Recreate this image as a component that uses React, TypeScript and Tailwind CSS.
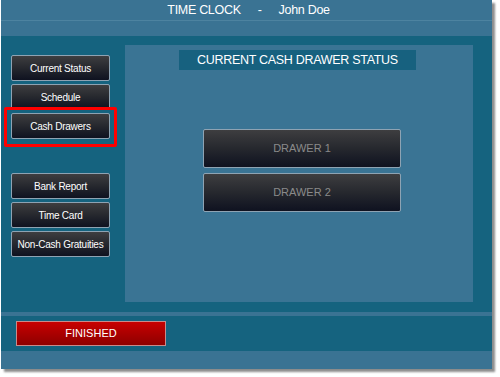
import React from "react";

const font = { fontFamily: '"Liberation Sans", Arial, sans-serif' };

function SideButton({ label }: { label: string }) {
  return (
    <div className="flex h-[26px] w-[99px] items-center justify-center rounded-[2px] border border-[#8ea3b3] bg-gradient-to-b from-[#3e3e40] via-[#26282e] to-[#0f1220] text-[10px] tracking-[-0.25px] text-white">
      {label}
    </div>
  );
}

export default function App() {
  return (
    <div className="h-[377px] w-[500px] bg-white" style={font}>
      <div className="ml-[1px] flex h-[369px] w-[491px] flex-col bg-[#15637f] shadow-[3px_3px_2px_rgba(0,0,0,0.45)]">
        <div className="flex h-[20px] items-center justify-center bg-[#3a7393] pl-[4px] text-[12.5px] tracking-[-0.3px] text-white">
          <span>TIME CLOCK</span>
          <span className="mx-[17px]">-</span>
          <span>John Doe</span>
        </div>
        <div className="h-px bg-[#4d83a0]" />
        <div className="h-[15px] bg-[#3a7393]" />
        <div className="flex h-[276px] pt-[9px]">
          <div className="flex w-[124px] flex-col pl-[10px] pt-[10px]">
            <div className="flex flex-col gap-[3px]">
              <SideButton label="Current Status" />
              <SideButton label="Schedule" />
              <div className="relative w-[99px]">
                <div className="absolute -bottom-[8px] -left-[7px] -right-[7px] -top-[6px] rounded-[2px] border-[3px] border-[#ff0000]" />
                <SideButton label="Cash Drawers" />
              </div>
            </div>
            <div className="mt-[34px] flex flex-col gap-[3px]">
              <SideButton label="Bank Report" />
              <SideButton label="Time Card" />
              <SideButton label="Non-Cash Gratuities" />
            </div>
          </div>
          <div className="flex h-[257px] w-[348px] flex-col bg-[#3a7494] pt-[5px]">
            <div className="ml-[54px] flex h-[20px] w-[237px] items-center justify-center bg-[#17617f] text-[12.5px] tracking-[-0.3px] text-white">
              CURRENT CASH DRAWER STATUS
            </div>
            <div className="ml-[78px] mt-[59px] flex flex-col gap-[5px]">
              <div className="flex h-[39px] w-[198px] items-center justify-center rounded-[2px] border border-[#8ea3b3] bg-gradient-to-b from-[#3e3e40] via-[#26282e] to-[#0f1220] text-[11px] text-[#8a8a8a]">
                DRAWER 1
              </div>
              <div className="flex h-[39px] w-[198px] items-center justify-center rounded-[2px] border border-[#8ea3b3] bg-gradient-to-b from-[#3e3e40] via-[#26282e] to-[#0f1220] text-[11px] text-[#8a8a8a]">
                DRAWER 2
              </div>
            </div>
          </div>
        </div>
        <div className="h-[4px] bg-[#3a7393]" />
        <div className="h-[35px] pl-[15px] pt-[5px]">
          <div className="flex h-[25px] w-[150px] items-center justify-center border border-[#c98a8a] bg-gradient-to-b from-[#c80000] to-[#8e0000] text-[11px] text-white">
            FINISHED
          </div>
        </div>
        <div className="flex-1 bg-[#3a7393]" />
      </div>
    </div>
  );
}
